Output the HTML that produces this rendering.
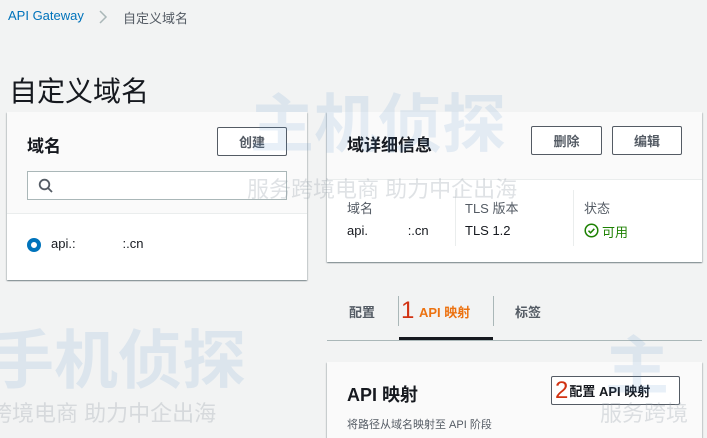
<!DOCTYPE html>
<html><head><meta charset="utf-8"><style>
*{margin:0;padding:0;box-sizing:border-box}
html,body{width:707px;height:438px;overflow:hidden}
body{background:#f2f3f3;font-family:"Liberation Sans","Noto Sans CJK SC",sans-serif;color:#16191f;position:relative}
.a{position:absolute}
.card{position:absolute;background:#fff;box-shadow:0 1px 1px rgba(0,28,36,.3),1px 1px 1px rgba(0,28,36,.15),-1px 1px 1px rgba(0,28,36,.15)}
.btn{position:absolute;border:1px solid #545b64;background:#fff;font-size:13px;font-weight:bold;color:#545b64;display:flex;align-items:center;justify-content:center;border-radius:2px}
.lbl{font-size:13px;color:#545b64}
.val{font-size:13px;color:#16191f}
.wm{position:absolute;color:rgba(150,160,170,.3);font-size:22px;white-space:nowrap}
.big{position:absolute;color:rgba(80,140,200,.13);font-size:64px;font-weight:bold;white-space:nowrap}
</style></head><body>
<div class="a" style="left:8px;top:8px;font-size:13px;color:#0073bb">API Gateway</div>
<svg class="a" style="left:98px;top:10px" width="10" height="14" viewBox="0 0 10 14"><path d="M2 1l6 6-6 6" fill="none" stroke="#aab7b8" stroke-width="1.5"/></svg>
<div class="a" style="left:123px;top:8px;font-size:13px;color:#545b64">自定义域名</div>
<div class="a" style="left:9px;top:70px;font-size:28px;color:#16191f">自定义域名</div>

<div class="card" style="left:7px;top:112px;width:300px;height:168px">
 <div class="a" style="left:0;top:0;width:300px;height:102px;background:#fafafa;border-bottom:1px solid #eaeded"></div>
 <div class="a" style="left:20px;top:20px;font-size:17px;font-weight:bold">域名</div>
 <div class="btn" style="left:210px;top:15px;width:70px;height:29px">创建</div>
 <div class="a" style="left:20px;top:59px;width:260px;height:29px;border:1px solid #aab7b8;background:#fff">
  <svg class="a" style="left:10px;top:6px" width="16" height="16" viewBox="0 0 16 16"><circle cx="6.5" cy="6.5" r="4.8" fill="none" stroke="#545b64" stroke-width="1.8"/><path d="M10 10l4 4" stroke="#545b64" stroke-width="1.8"/></svg>
 </div>
 <div class="a" style="left:20px;top:126px;width:14px;height:14px;border-radius:50%;border:4px solid #0073bb;background:#fff"></div>
 <div class="a val" style="left:44px;top:124px">api.:&nbsp;&nbsp;&nbsp;&nbsp;&nbsp;&nbsp;&nbsp;&nbsp;&nbsp;&nbsp;&nbsp;&nbsp;&nbsp;:.cn</div>
</div>

<div class="card" style="left:327px;top:112px;width:375px;height:150px">
 <div class="a" style="left:0;top:0;width:375px;height:68px;background:#fafafa;border-bottom:1px solid #eaeded"></div>
 <div class="a" style="left:20px;top:19px;font-size:17px;font-weight:bold">域详细信息</div>
 <div class="btn" style="left:204px;top:14px;width:71px;height:29px">删除</div>
 <div class="btn" style="left:285px;top:14px;width:70px;height:29px">编辑</div>
 <div class="a lbl" style="left:20px;top:86px">域名</div>
 <div class="a val" style="left:20px;top:111px">api.&nbsp;&nbsp;&nbsp;&nbsp;&nbsp;&nbsp;&nbsp;&nbsp;&nbsp;&nbsp;&nbsp;:.cn</div>
 <div class="a" style="left:128px;top:78px;width:1px;height:56px;background:#eaeded"></div>
 <div class="a lbl" style="left:138px;top:86px">TLS 版本</div>
 <div class="a val" style="left:138px;top:111px">TLS 1.2</div>
 <div class="a" style="left:246px;top:78px;width:1px;height:56px;background:#eaeded"></div>
 <div class="a lbl" style="left:257px;top:86px">状态</div>
 <svg class="a" style="left:257px;top:111px" width="15" height="15" viewBox="0 0 16 16"><circle cx="8" cy="8" r="6.7" fill="none" stroke="#1d8102" stroke-width="1.6"/><path d="M4.8 8.2l2.2 2.2 4-4.2" fill="none" stroke="#1d8102" stroke-width="1.6"/></svg>
 <div class="a" style="left:275px;top:110px;font-size:13px;color:#1d8102">可用</div>
</div>

<div class="a" style="left:349px;top:302px;font-size:13px;font-weight:bold;color:#545b64">配置</div>
<div class="a" style="left:398px;top:296px;width:1px;height:30px;background:#aab7b8"></div>
<div class="a" style="left:401px;top:296px;font-size:24px;color:#d13212;line-height:30px">1</div>
<div class="a" style="left:419px;top:302px;font-size:13px;font-weight:bold;color:#ec7211">API 映射</div>
<div class="a" style="left:493px;top:296px;width:1px;height:30px;background:#aab7b8"></div>
<div class="a" style="left:515px;top:302px;font-size:13px;font-weight:bold;color:#545b64">标签</div>
<div class="a" style="left:327px;top:340px;width:375px;height:1px;background:#aab7b8"></div>
<div class="a" style="left:399px;top:337px;width:94px;height:3px;background:#16191f"></div>

<div class="card" style="left:327px;top:362px;width:375px;height:90px">
 <div class="a" style="left:0;top:0;width:375px;height:90px;background:#fafafa"></div>
 <div class="a" style="left:20px;top:19px;font-size:18px;font-weight:bold">API 映射</div>
 <div class="btn" style="left:224px;top:14px;width:129px;height:29px;justify-content:flex-start;padding-left:3px;color:#16191f"><span style="font-size:24px;font-weight:normal;color:#d13212;margin-right:1px">2</span>配置 API 映射</div>
 <div class="a" style="left:20px;top:54px;font-size:11px;color:#545b64">将路径从域名映射至 API 阶段</div>
</div>

<div class="big" style="left:250px;top:74px">主机侦探</div>
<div class="wm" style="left:247px;top:172px">服务跨境电商 助力中企出海</div>
<div class="big" style="left:-10px;top:310px">手机侦探</div>
<div class="wm" style="left:-10px;top:396px">跨境电商 助力中企出海</div>
<div class="big" style="left:605px;top:316px">主</div>
<div class="wm" style="left:600px;top:396px">服务跨境</div>
</body></html>
